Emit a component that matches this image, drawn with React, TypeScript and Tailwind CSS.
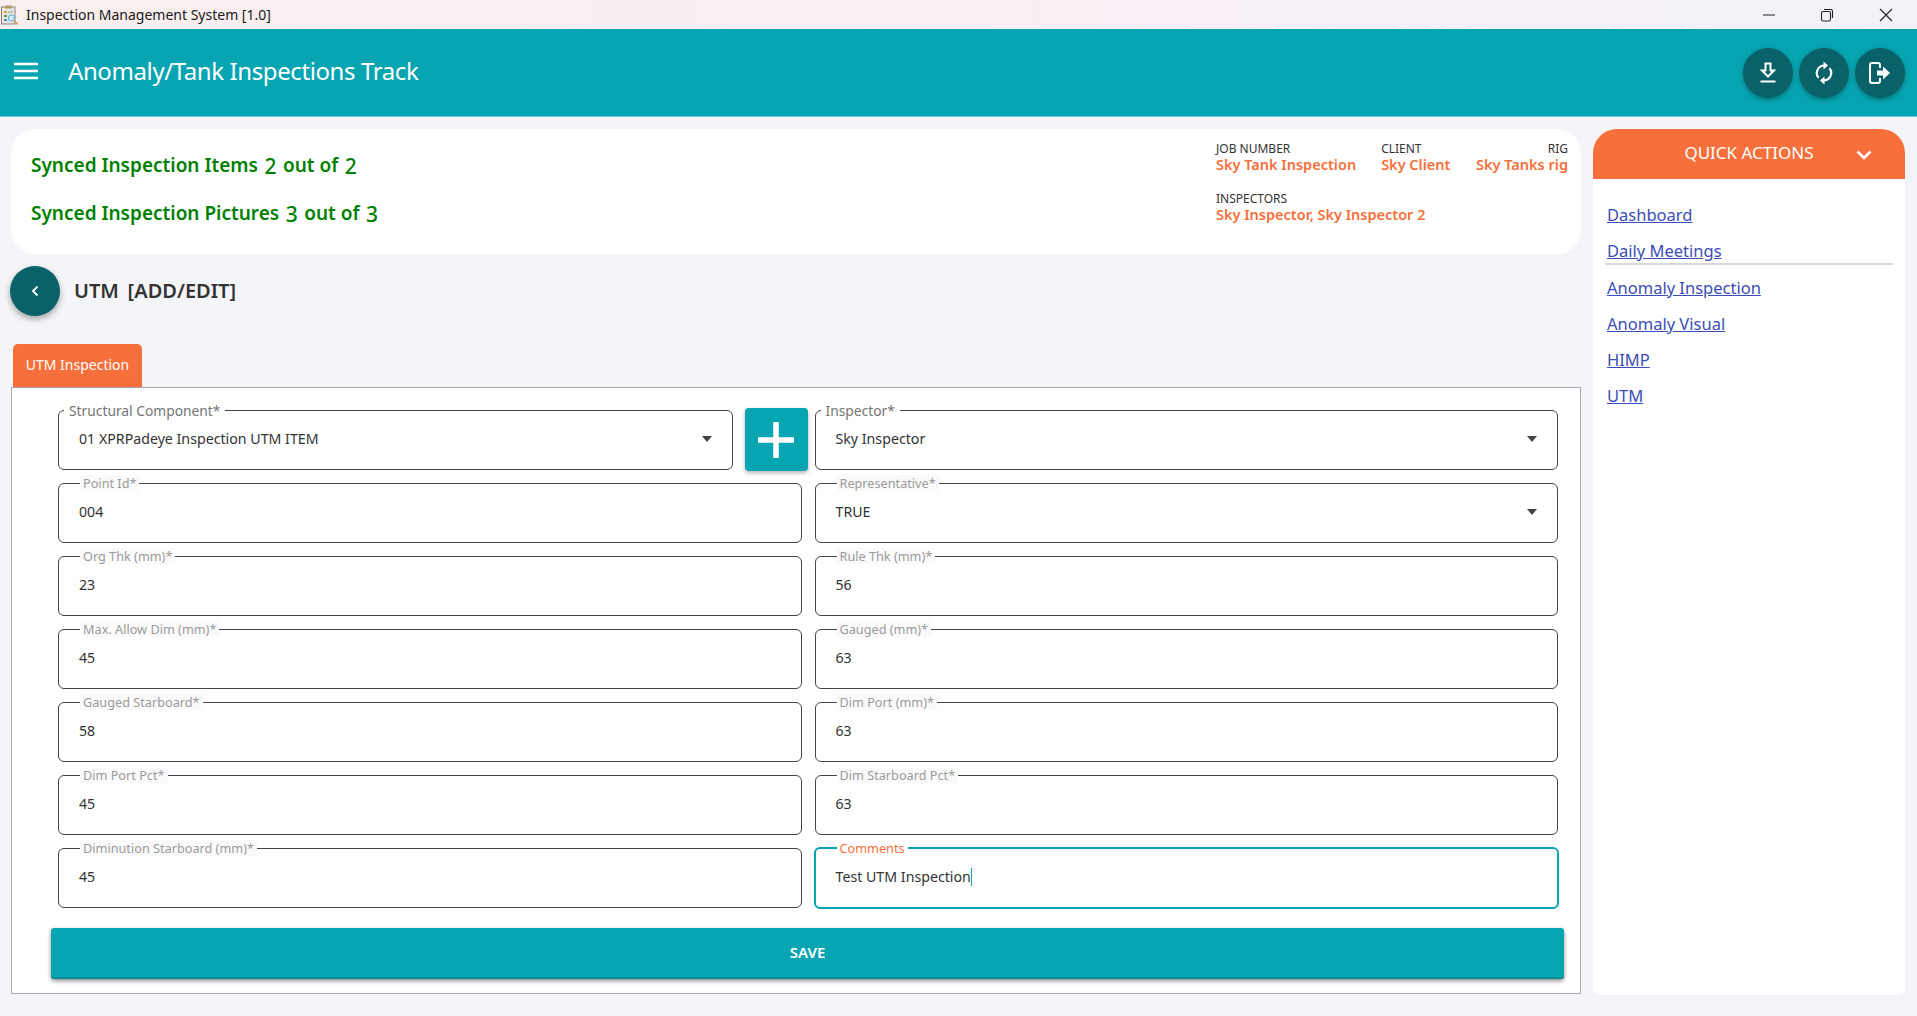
import React from "react";

const FONT = "font-['Noto_Sans','Open_Sans',sans-serif]";

function AppIcon() {
  return (
    <svg width="20" height="20" viewBox="0 0 18 20" className="shrink-0">
      <rect x="0.5" y="2" width="13.5" height="17" fill="#e8e6e1" stroke="#8a8078" />
      <rect x="4" y="0.5" width="7" height="3" fill="#b89a6a" />
      <rect x="3" y="6" width="3" height="2" fill="#e2a13b" />
      <rect x="3" y="10" width="3" height="2" fill="#59a14f" />
      <rect x="3" y="14" width="3" height="2" fill="#4e89c7" />
      <rect x="7" y="6.5" width="5" height="1" fill="#9a9a9a" />
      <circle cx="10.5" cy="13" r="3.2" fill="#cfe8f7" stroke="#5aa6d6" />
      <path d="M13 15.5 L17 19.5" stroke="#e8955a" strokeWidth="1.6" />
    </svg>
  );
}

function RoundButton({ children }: { children: React.ReactNode }) {
  return (
    <button className="w-[50px] h-[50px] rounded-full bg-[#096269] flex items-center justify-center shadow-[0_2px_5px_rgba(0,0,0,0.3)]">
      {children}
    </button>
  );
}

function Field({
  label,
  value,
  select,
  notch,
  focused,
  className,
}: {
  label: string;
  value: string;
  select?: boolean;
  notch?: boolean;
  focused?: boolean;
  className?: string;
}) {
  return (
    <div
      className={`relative rounded-[6px] bg-white ${
        focused ? "h-[62px] -my-px -mx-px border-2 border-[#07a5b1]" : "h-[60px] border border-[#454545]"
      } ${className ?? ""}`}
    >
      <span
        className={`absolute flex items-center whitespace-nowrap leading-none ${
          focused
            ? "top-[-9px] h-[16px] left-[21px] px-[3px] text-[12.7px] text-[#f76f3b] bg-white"
            : notch
              ? "top-[-9px] h-[18px] left-[5px] px-[5px] text-[13.8px] text-[#757575] bg-white"
              : "top-[-9px] h-[16px] left-[21px] px-[3px] text-[12.7px] text-[#9a9a9a] bg-[#fafafa]"
        }`}
      >
        {label}
      </span>
      <div className="h-full flex items-start pl-[20px] pt-[19px] text-[14.2px] leading-[18px] text-[#333]">
        {value}
        {focused && <span className="w-px h-[18px] bg-[#07a5b1]" />}
      </div>
      {select && (
        <svg
          width="10"
          height="6"
          viewBox="0 0 10 6"
          className="absolute right-[20px] top-[25px]"
        >
          <path d="M0 0h10L5 6z" fill="#444" />
        </svg>
      )}
    </div>
  );
}

const rows: [string, string, string, string][] = [
  ["Org Thk (mm)*", "23", "Rule Thk (mm)*", "56"],
  ["Max. Allow Dim (mm)*", "45", "Gauged (mm)*", "63"],
  ["Gauged Starboard*", "58", "Dim Port (mm)*", "63"],
  ["Dim Port Pct*", "45", "Dim Starboard Pct*", "63"],
];

const links = ["Dashboard", "Daily Meetings", "Anomaly Inspection", "Anomaly Visual", "HIMP", "UTM"];

export default function App() {
  return (
    <div className={`${FONT} w-[1917px] h-[1016px] overflow-hidden bg-[#f3f5f9] flex flex-col`}>
      {/* Title bar */}
      <div className="h-[29px] shrink-0 flex items-center bg-gradient-to-r from-[#f9efee] via-[#f8eef4] to-[#f3f2f8]">
        <div className="w-[26px] flex items-center"><AppIcon /></div>
        <span className="text-[14px] leading-none text-[#1a1a1a]">Inspection Management System [1.0]</span>
        <div className="ml-auto flex items-center text-[#111]">
          <div className="w-[60px] flex justify-center">
            <svg width="14" height="14" viewBox="0 0 14 14"><path d="M1 7h12" stroke="#222" strokeWidth="1" /></svg>
          </div>
          <div className="w-[56px] flex justify-center">
            <svg width="14" height="14" viewBox="0 0 14 14" fill="none" stroke="#222" strokeWidth="1.1">
              <rect x="1.5" y="3.5" width="9" height="9.5" rx="1.8" />
              <path d="M4 1.5h7a1.8 1.8 0 0 1 1.5 1.8V10" />
            </svg>
          </div>
          <div className="w-[62px] flex justify-center">
            <svg width="14" height="14" viewBox="0 0 14 14"><path d="M1 1l12 12M13 1L1 13" stroke="#222" strokeWidth="1.1" /></svg>
          </div>
        </div>
      </div>

      {/* Header */}
      <header className="h-[88px] shrink-0 bg-[#07a5b1] border-b border-[#6ccbd3] flex items-center pl-[14px] pr-[12px]">
        <svg width="24" height="18" viewBox="0 0 24 18" className="mb-[3px]">
          <path d="M0 2h24M0 9h24M0 16h24" stroke="#fff" strokeWidth="2.4" />
        </svg>
        <h1 className="ml-[30px] mb-[3px] text-[24px] tracking-[-0.4px] leading-none font-normal text-white">Anomaly/Tank Inspections Track</h1>
        <div className="ml-auto flex gap-[6px]">
          <RoundButton>
            <svg width="18" height="22" viewBox="0 0 18 22" fill="none" stroke="#fff" strokeWidth="2">
              <path d="M6.5 1.5h5v7h3.5L9 14.5 3 8.5h3.5z" />
              <path d="M1.5 19.5h15" />
            </svg>
          </RoundButton>
          <RoundButton>
            <svg width="20" height="24" viewBox="0 0 20 24" fill="none">
              <path d="M10.5 4.5A7.5 7.5 0 0 0 4.5 16.7" stroke="#fff" strokeWidth="2.2" />
              <path d="M9.5 0.5v8L14 4.5z" fill="#fff" />
              <path d="M9.5 19.5a7.5 7.5 0 0 0 6-12.2" stroke="#fff" strokeWidth="2.2" />
              <path d="M10.5 23.5v-8L6 19.5z" fill="#fff" />
            </svg>
          </RoundButton>
          <RoundButton>
            <svg width="22" height="22" viewBox="0 0 22 22" fill="none">
              <path d="M11 6V3a2 2 0 0 0-2-2H3a2 2 0 0 0-2 2v16a2 2 0 0 0 2 2h6a2 2 0 0 0 2-2v-3" stroke="#fff" strokeWidth="2" />
              <path d="M8 8.5h6V4.5l7 6.5-7 6.5v-4H8z" fill="#fff" />
            </svg>
          </RoundButton>
        </div>
      </header>

      {/* Body */}
      <div className="flex-1 flex items-start pt-[12px] pl-[11px] pr-[12px]">
        {/* Left column */}
        <div className="w-[1570px] shrink-0">
          <section className="h-[125px] rounded-[24px] bg-white flex justify-between pl-[20px] pr-[13px]">
            <div className="pt-[12px] text-[#008000] text-[19px] font-semibold leading-[48px]">
              <div className="h-[48px] flex gap-[6.5px] items-center">
                <span>Synced Inspection Items</span><span className="font-medium text-[21px] mt-[2px]">2</span><span>out of</span><span className="font-medium text-[21px] mt-[2px]">2</span>
              </div>
              <div className="h-[48px] flex gap-[6.5px] items-center">
                <span>Synced Inspection Pictures</span><span className="font-medium text-[21px] mt-[2px]">3</span><span>out of</span><span className="font-medium text-[21px] mt-[2px]">3</span>
              </div>
            </div>
            <div className="w-[352px] pt-[12px]">
              <div className="flex gap-[25px]">
                <div>
                  <div className="text-[12px] leading-[15px] text-[#333]">JOB NUMBER</div>
                  <div className="text-[14.5px] leading-[18px] -mt-px font-semibold text-[#f76f3b]">Sky Tank Inspection</div>
                </div>
                <div>
                  <div className="text-[12px] leading-[15px] text-[#333]">CLIENT</div>
                  <div className="text-[14.5px] leading-[18px] -mt-px font-semibold text-[#f76f3b]">Sky Client</div>
                </div>
                <div className="text-right ml-auto">
                  <div className="text-[12px] leading-[15px] text-[#333]">RIG</div>
                  <div className="text-[14.5px] leading-[18px] -mt-px font-semibold text-[#f76f3b]">Sky Tanks rig</div>
                </div>
              </div>
              <div className="mt-[18px]">
                <div className="text-[12px] leading-[15px] text-[#333]">INSPECTORS</div>
                <div className="text-[14.5px] leading-[18px] -mt-px font-semibold text-[#f76f3b]">Sky Inspector, Sky Inspector 2</div>
              </div>
            </div>
          </section>

          <div className="mt-[12px] -ml-px h-[50px] flex items-center">
            <button className="w-[50px] h-[50px] rounded-full bg-[#096269] flex items-center justify-center shadow-[0_3px_6px_rgba(0,0,0,0.35)]">
              <svg width="10" height="12" viewBox="0 0 10 12" fill="none"><path d="M7.5 1.5L3 6l4.5 4.5" stroke="#fff" strokeWidth="1.8" /></svg>
            </button>
            <h2 className="ml-[14px] text-[20px] [word-spacing:3.5px] font-semibold leading-none text-[#333]">UTM [ADD/EDIT]</h2>
          </div>

          <div className="mt-[28px] ml-[2px] w-[129px] h-[43px] pb-[2px] rounded-t-[5px] bg-[#f76f3b] flex items-center justify-center text-[14px] text-white">
            UTM Inspection
          </div>

          <section className="h-[607px] bg-white border border-[#aaaaaa] pt-[22px] pl-[46px] pr-[22px]">
            <div className="grid grid-cols-2 gap-x-[13px] gap-y-[13px]">
              <div className="flex items-start gap-[12px] -mr-[6px]">
                <Field className="flex-1" select notch label="Structural Component*" value="01 XPRPadeye Inspection UTM ITEM" />
                <button className="w-[63px] h-[63px] -mt-[2px] -mb-[3px] shrink-0 rounded-[4px] bg-[#07a5b1] flex items-center justify-center shadow-[0_2px_4px_rgba(0,0,0,0.3)]">
                  <svg width="38" height="38" viewBox="0 0 38 38"><path d="M19 1v36M1 19h36" stroke="#fff" strokeWidth="5.5" /></svg>
                </button>
              </div>
              <Field select notch label="Inspector*" value="Sky Inspector" />
              <Field label="Point Id*" value="004" />
              <Field select label="Representative*" value="TRUE" />
              {rows.map((r) => (
                <React.Fragment key={r[0]}>
                  <Field label={r[0]} value={r[1]} />
                  <Field label={r[2]} value={r[3]} />
                </React.Fragment>
              ))}
              <Field label="Diminution Starboard (mm)*" value="45" />
              <Field focused label="Comments" value="Test UTM Inspection" />
            </div>
            <button className="mt-[20px] -ml-[7px] w-[1513px] h-[51px] rounded-[3px] bg-[#07a5b1] border-b-2 border-[#068a94] shadow-[0_2px_4px_rgba(0,0,0,0.45)] text-white text-[15px] font-semibold">
              SAVE
            </button>
          </section>
        </div>

        {/* Sidebar */}
        <aside className="ml-[12px] w-[312px] h-[866px] rounded-t-[24px] rounded-b-[6px] bg-white overflow-hidden">
          <div className="h-[50px] pb-[2px] bg-[#f76f3b] relative flex items-center justify-center text-[17px] text-white">
            QUICK ACTIONS
            <svg width="16" height="10" viewBox="0 0 16 10" className="absolute right-[33px] top-[21px]" fill="none">
              <path d="M1.5 1.5L8 8l6.5-6.5" stroke="#fff" strokeWidth="2.6" />
            </svg>
          </div>
          <nav className="pt-[18px] pl-[14px] pr-[12px]">
            {links.map((l, i) =>
              i === 1 ? (
                <div key={l} className="h-[32px] mb-[5px] pt-[10px] -ml-[2px] pl-[2px] border-b-2 border-[#d8d8d8]">
                  <a className="block text-[16.5px] leading-none text-[#3b4db8] underline">{l}</a>
                </div>
              ) : (
                <div key={l} className="h-[36px] flex items-center">
                  <a className="text-[16.5px] leading-none text-[#3b4db8] underline">{l}</a>
                </div>
              ),
            )}
          </nav>
        </aside>
      </div>
    </div>
  );
}
